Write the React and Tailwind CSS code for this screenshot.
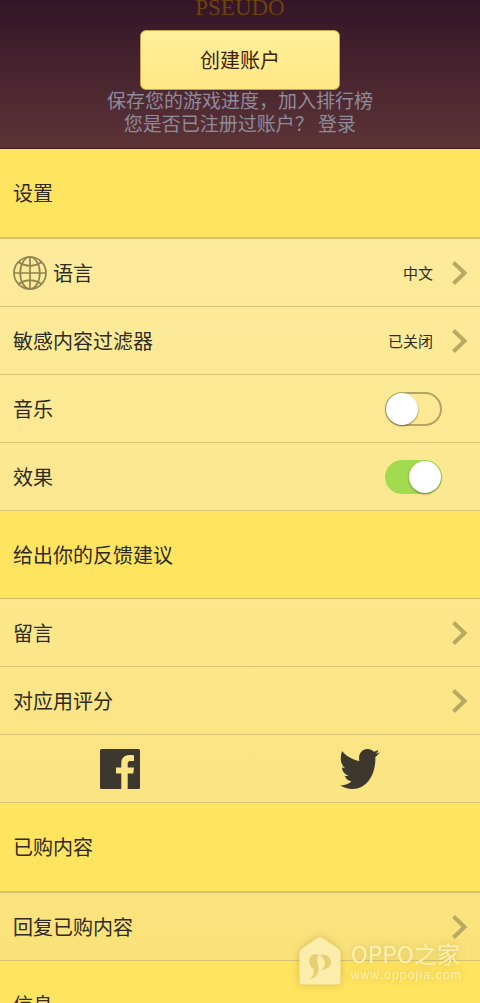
import React, { useState } from "react";

function Chevron() {
  return (
    <svg className="h-6 w-4 shrink-0" viewBox="0 0 16 24" fill="none" stroke="#b9a862" strokeWidth="4" aria-hidden="true">
      <path d="M1.500 1.500L12.500 12L1.500 22.500" />
    </svg>
  );
}

function Globe() {
  return (
    <svg className="h-[34px] w-[34px] shrink-0" viewBox="0 0 34 34" fill="none" stroke="#8f8350" strokeWidth="1.7" aria-hidden="true">
      <circle cx="17" cy="17" r="16" />
      <ellipse cx="17" cy="17" rx="9.8" ry="16" />
      <path d="M17 1v32M1 17h32M5.5 6.2Q17 13.5 28.5 6.2M5.5 27.8Q17 20.5 28.5 27.8" />
    </svg>
  );
}

function FacebookIcon() {
  return (
    <svg className="h-10 w-10" viewBox="0 0 40 40" fill="#3d372e" aria-hidden="true">
      <path d="M1.5 0H38.5A1.5 1.5 0 0 1 40 1.5V38.5A1.5 1.5 0 0 1 38.5 40H27.7V24.5H33.2L34 18.5H27.7V15C27.7 13 28.6 11.9 30.6 11.9H34V6.2C33 6.1 31.2 6 29.5 6C24.4 6 21.3 9 21.3 14.3V18.5H16V24.5H21.3V40H1.5A1.5 1.5 0 0 1 0 38.5V1.5A1.5 1.5 0 0 1 1.5 0Z" />
    </svg>
  );
}

function TwitterIcon() {
  return (
    <svg className="h-10 w-10" viewBox="32 26 120 120" fill="#3d372e" aria-hidden="true">
      <path d="M38 32C50 47 68 58 90 62C86 42 97 26 114 26C122 26 129 29 133 34C138 33 143 31 147 28C146 33 143 37 139 40C143 40 147 38 151 36C148 42 143 46 138 50C140 103 112 146 70 146C56 146 42 142 32 135C45 136 57 132 67 123C56 122 49 115 46 106C50 107 53 107 57 106C45 102 38 92 38 81C41 83 44 84 48 84C36 75 30 56 38 32Z" />
    </svg>
  );
}

function SectionTitle({ children, thick }) {
  return (
    <h2
      className={
        "flex h-[88px] shrink-0 items-center bg-[#ffe45f] px-[13px] text-xl font-normal " +
        (thick ? "box-content border-b-2 border-[#d5c16e]" : "border-b border-[#d1bc66]")
      }
    >
      {children}
    </h2>
  );
}

const rowClass =
  "flex h-[68px] w-full shrink-0 items-center border-b border-[#d6c374] pl-[13px] pr-3 text-left text-xl";

function LinkRow({ icon, label, value }) {
  return (
    <button type="button" className={rowClass}>
      {icon}
      <span className={icon ? "ml-1.5" : ""}>{label}</span>
      <span className="ml-auto mr-[19px] text-[15px]">{value}</span>
      <Chevron />
    </button>
  );
}

function ToggleRow({ id, label, initial }) {
  const [on, setOn] = useState(initial);
  return (
    <div className={rowClass}>
      <label htmlFor={id}>{label}</label>
      <span className="relative ml-auto mr-[26px] h-[34px] w-[57px]">
        <input
          id={id}
          type="checkbox"
          checked={on}
          onChange={() => setOn(!on)}
          className="peer block h-full w-full appearance-none rounded-full border-2 border-[#b5a565] checked:border-[#a2da50] checked:bg-[#a2da50]"
        />
        <span className="pointer-events-none absolute left-px top-px h-8 w-8 rounded-full bg-white shadow-[0_1px_2px_rgba(60,50,0,0.55)] peer-checked:left-6" />
      </span>
    </div>
  );
}

function Watermark() {
  return (
    <div className="pointer-events-none absolute bottom-[18px] right-[18px] flex items-center gap-2.5 text-[#fff0b0] drop-shadow-[0_0_4px_rgba(150,120,30,0.4)]">
      <svg className="h-12 w-[42px]" viewBox="0 0 42 48" aria-hidden="true">
        <path d="M18.5 1Q21 -.5 23.5 1L39 11.5Q41.5 13 41.5 16V44Q41.500 47.500 38 47.500H4Q.5 47.500 .5 44V16Q.5 13 3 11.500Z" fill="#fcedac" />
        <path d="M20 18C13 15 9 21 10.5 27C11.5 31 15 30 15 34C15 37 13 40 11 42C17 41 19.5 37 19.5 31C19.5 26 16.5 22 20 18Z" fill="#e6cf70" />
        <path d="M20.5 18C26 16 32 20 32 25C32 30 27 33 22 33C25 31 26.5 28 25.5 24C24.5 21 23 19 20.500 18Z" fill="#e6cf70" />
      </svg>
      <div className="flex flex-col items-start">
        <span className="text-[23px] leading-7">OPPO之家</span>
        <span className="font-['Liberation_Sans','Noto_Sans_CJK_SC',sans-serif] text-xs leading-4 tracking-widest">www.oppojia.com</span>
      </div>
    </div>
  );
}

export default function App() {
  return (
    <div className="relative flex h-screen flex-col overflow-hidden bg-[#fbe47e] font-['Noto_Sans_CJK_SC',sans-serif] text-[#2f2b22]">
      <header className="flex h-[149px] shrink-0 flex-col items-center border-b border-[#3f2022] bg-linear-to-b from-[#341527] to-[#5c3437]">
        <div className="-mt-2 h-[38px] font-['Liberation_Serif',serif] text-[23px] leading-8 text-[#6b430e]">PSEUDO</div>
        <button
          type="button"
          className="h-[60px] w-[200px] shrink-0 rounded-md border border-[#c9a24a] bg-linear-to-b from-[#fff09c] to-[#ffe783] text-xl text-[#3e220a]"
        >
          创建账户
        </button>
        <p className="-mt-0.5 text-center text-[19px] leading-[23px] text-[#8f8b9b]">
          保存您的游戏进度，加入排行榜
          <br />
          您是否已注册过账户？ <a href="#login">登录</a>
        </p>
      </header>
      <main className="flex flex-col bg-linear-to-b from-[#fdec9f] to-[#fae176]">
        <SectionTitle thick>设置</SectionTitle>
        <LinkRow icon={<Globe />} label="语言" value="中文" />
        <LinkRow label="敏感内容过滤器" value="已关闭" />
        <ToggleRow id="music" label="音乐" initial={false} />
        <ToggleRow id="effects" label="效果" initial={true} />
        <SectionTitle>给出你的反馈建议</SectionTitle>
        <LinkRow label="留言" />
        <LinkRow label="对应用评分" />
        <div className="grid h-[68px] shrink-0 grid-cols-2 border-b border-[#d6c374]">
          <a href="#facebook" aria-label="Facebook" className="flex items-center justify-center">
            <FacebookIcon />
          </a>
          <a href="#twitter" aria-label="Twitter" className="flex items-center justify-center">
            <TwitterIcon />
          </a>
        </div>
        <SectionTitle thick>已购内容</SectionTitle>
        <LinkRow label="回复已购内容" />
        <SectionTitle>信息</SectionTitle>
      </main>
      <Watermark />
    </div>
  );
}
